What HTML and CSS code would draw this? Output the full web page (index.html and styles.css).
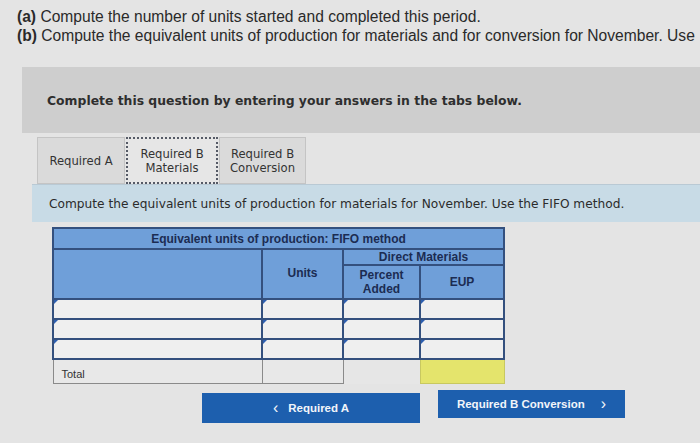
FILE: index.html
```html
<!DOCTYPE html>
<html>
<head>
<meta charset="utf-8">
<link rel="stylesheet" href="styles.css">
</head>
<body>
<div class="intro">
  <p class="line"><b>(a)</b> Compute the number of units started and completed this period.</p>
  <p class="line"><b>(b)</b> Compute the equivalent units of production for materials and for conversion for November. Use</p>
</div>
<div class="banner">Complete this question by entering your answers in the tabs below.</div>
<div class="tabs">
  <div class="tab tab-a">Required A</div>
  <div class="tab tab-b active">Required B<br>Materials</div>
  <div class="tab tab-c">Required B<br>Conversion</div>
</div>
<div class="instr">Compute the equivalent units of production for materials for November. Use the FIFO method.</div>
<table class="eup">
  <colgroup>
    <col class="c1"><col class="c2"><col class="c3"><col class="c4">
  </colgroup>
  <tr class="r-title"><th colspan="4">Equivalent units of production: FIFO method</th></tr>
  <tr class="r-dm"><th rowspan="2"></th><th rowspan="2">Units</th><th colspan="2">Direct Materials</th></tr>
  <tr class="r-sub"><th>Percent<br>Added</th><th>EUP</th></tr>
  <tr class="r-data"><td class="in"></td><td class="in"></td><td class="in"></td><td class="in"></td></tr>
  <tr class="r-data"><td class="in"></td><td class="in"></td><td class="in"></td><td class="in"></td></tr>
  <tr class="r-data"><td class="in"></td><td class="in"></td><td class="in"></td><td class="in"></td></tr>
  <tr class="r-total"><td class="t-label">Total</td><td class="t-units"></td><td class="t-blank"></td><td class="t-eup"></td></tr>
</table>
<div class="nav">
  <div class="btn btn-prev"><span class="chev">&lsaquo;</span>Required A</div>
  <div class="btn btn-next">Required B Conversion<span class="chev chev-r">&rsaquo;</span></div>
</div>
</body>
</html>
```
FILE: styles.css
```css
html, body {
  margin: 0;
  padding: 0;
}
body {
  width: 700px;
  height: 443px;
  overflow: hidden;
  background: #e4e4e4;
  font-family: "Liberation Sans", Arial, sans-serif;
  color: #2b2b2b;
}
.intro {
  padding: 7px 0 0 17px;
}
.line {
  margin: 0;
  font-size: 15.6px;
  line-height: 19px;
  white-space: nowrap;
  color: #2a2a2a;
}
.banner {
  margin: 22px 0 0 22px;
  height: 66px;
  background: #cecece;
  padding-left: 25px;
  display: flex;
  align-items: center;
  font-family: "DejaVu Sans", Verdana, sans-serif;
  font-weight: bold;
  font-size: 12.4px;
  color: #2e2e2e;
}
.tabs {
  margin: 4px 0 0 37px;
  display: flex;
  height: 47px;
}
.tab {
  box-sizing: border-box;
  height: 47px;
  display: flex;
  align-items: center;
  justify-content: center;
  text-align: center;
  font-family: "DejaVu Sans", Verdana, sans-serif;
  font-size: 11.6px;
  line-height: 14px;
  color: #333;
  background: #dadada;
  border: 1px solid #c4c4c4;
}
.tab-a { width: 88px; }
.tab-b { width: 92px; margin-left: 1px; }
.tab-c { width: 87px; margin-left: 1px; }
.tab.active {
  background: #e6e6e6;
  border: 2px dotted #555a66;
}
.instr {
  margin-left: 32px;
  height: 37px;
  background: #c8dbe6;
  padding-left: 17px;
  display: flex;
  align-items: center;
  font-family: "DejaVu Sans", Verdana, sans-serif;
  font-size: 12.2px;
  color: #2b2b2b;
  border-top: 1px solid #b9c9d4;
}
.eup {
  margin: 5px 0 0 52px;
  border-collapse: collapse;
  table-layout: fixed;
  width: 451px;
  font-family: "Liberation Sans", Arial, sans-serif;
}
.c1 { width: 209px; }
.c2 { width: 81px; }
.c3 { width: 77px; }
.c4 { width: 84px; }
.eup th {
  background: #6f9fd9;
  color: #1c2c52;
  font-weight: bold;
  font-size: 12px;
  line-height: 14px;
  border: 2px solid #34507e;
  padding: 0;
  text-align: center;
}
.r-title th {
  height: 19px;
}
.r-dm th { height: 13px; }
.r-dm th:nth-child(2) { vertical-align: top; padding-top: 16px; }
.r-sub th { height: 32px; }
.eup td {
  padding: 0;
}
.r-data td {
  height: 18px;
}
.in {
  position: relative;
  background: #efefef;
  border: 2px solid #34507e;
}
.in::before {
  content: "";
  position: absolute;
  left: 0;
  top: 0;
  border-top: 4px solid #2d5fb0;
  border-right: 4px solid transparent;
  border-bottom: 3px solid transparent;
}
.r-total td {
  height: 20px;
}
.t-label {
  border: 1px solid #8a8a8a;
  background: #e8e8e8;
  font-size: 11px;
  color: #333;
  padding-left: 8px !important;
  vertical-align: bottom;
  padding-bottom: 3px !important;
}
.t-units {
  border: 1px solid #8a8a8a;
  background: #e8e8e8;
}
.t-blank {
  background: #e6e6e6;
}
.t-eup {
  background: #e4e46c;
  border: 1px solid #c8c860;
}
.nav {
  display: flex;
  align-items: flex-start;
  margin: 8px 0 0 202px;
}
.btn {
  box-sizing: border-box;
  background: #1d5fae;
  color: #f2f5fa;
  font-family: "Liberation Sans", Arial, sans-serif;
  font-weight: bold;
  font-size: 11.5px;
  display: flex;
  align-items: center;
  justify-content: center;
}
.btn-prev {
  width: 218px;
  height: 30px;
  margin-top: 1px;
}
.btn-next {
  width: 187px;
  height: 28px;
  margin-left: 18px;
  margin-top: -2px;
}
.chev {
  font-size: 16px;
  font-weight: normal;
  margin-right: 10px;
  line-height: 1;
}
.chev-r {
  margin-right: 0;
  margin-left: 16px;
}
```
